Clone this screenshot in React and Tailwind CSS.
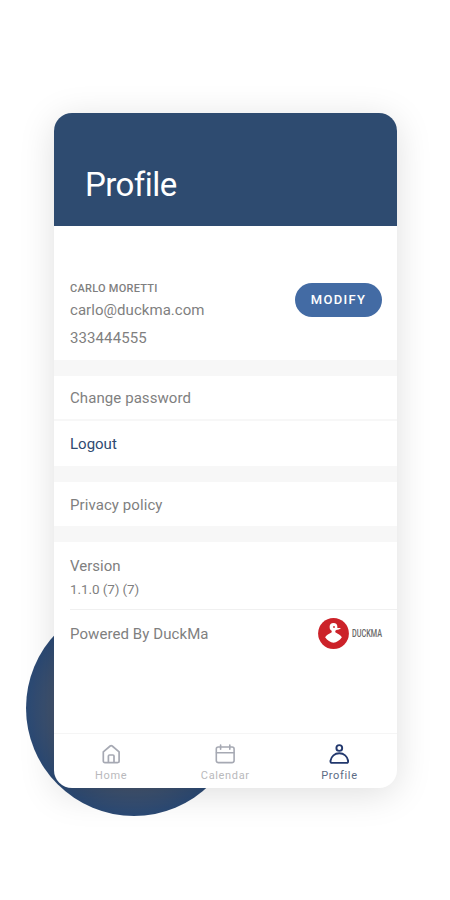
import React from 'react';

const tabs = [
    { label: 'Home', Icon: HomeIcon, active: false },
    { label: 'Calendar', Icon: CalendarIcon, active: false },
    { label: 'Profile', Icon: ProfileIcon, active: true },
];

function HomeIcon() {
    return (
        <svg width="20" height="20" viewBox="0 0 20 20" fill="none" stroke="#a6a9b3" strokeWidth="1.7" strokeLinejoin="round">
            <path d="M2.3 7.8 9.2 2c.7-.6 1.3-.6 2 0l6.9 5.800v9.100c0 1-.7 1.700-1.700 1.700H4c-1 0-1.700-.7-1.700-1.700V7.800Z" />
            <path d="M7.4 18.300v-6.200c0-.7.4-1.100 1.100-1.100h3.400c.7 0 1.100.4 1.100 1.100v6.200" />
        </svg>
    );
}

function CalendarIcon() {
    return (
        <svg width="20" height="20" viewBox="0 0 20 20" fill="none" stroke="#a6a9b3" strokeWidth="1.6" strokeLinecap="round">
            <rect x="1.3" y="3" width="17.8" height="15.6" rx="2" />
            <path d="M1.5 8.800h17.400M5.600 1v4.300M14.800 1v4.300" />
        </svg>
    );
}

function ProfileIcon() {
    return (
        <svg width="20" height="20" viewBox="0 0 20 20" fill="none" stroke="#22386d" strokeWidth="1.9" strokeLinejoin="round">
            <circle cx="10.3" cy="4" r="2.9" />
            <path d="M10.3 9.300c-4.600 0-8 3.300-8.800 7.400-.2 1.400.4 2.200 1.600 2.200h14.400c1.200 0 1.800-.8 1.600-2.200-.8-4.100-4.200-7.400-8.800-7.400Z" />
        </svg>
    );
}

function DuckLogo() {
    return (
        <svg width="32" height="32" viewBox="0 0 32 32">
            <circle cx="15.5" cy="15.500" r="15.400" fill="#cc2229" />
            <circle cx="15.5" cy="9" r="3.900" fill="#fff" />
            <path d="M17.5 9.200c2 .8 3.500 1 5.300.8-.6 1.400-2.800 1.900-5.300 1.700Z" fill="#fff" />
            <path d="M13.7 11.500h3.600v2.700c2.800 1.500 5.200 3 6.600 5-2.400 3.200-5.200 5-8.400 5.600-3.200-.6-6-2.400-8.400-5.600 1.400-2 3.800-3.500 6.600-5Z" fill="#fff" />
            <circle cx="16" cy="9" r="0.900" fill="#cc2229" />
        </svg>
    );
}

export default function App() {
    return (
        <div className="relative h-[900px] w-[450px] overflow-hidden bg-white pl-[54px] pt-[113px] font-['Roboto',sans-serif] text-[#7f7f7f]">
            <div className="absolute left-[26px] top-[600px] h-[216px] w-[216px] rounded-full bg-[radial-gradient(circle_closest-side,#43536c_72%,#2c4a74_98%)]" />

            <div className="relative flex h-[675px] w-[342.5px] flex-col overflow-hidden rounded-[18px] bg-white shadow-[0_6px_36px_rgba(0,0,0,0.13)]">
                <div className="flex h-[113px] shrink-0 items-end bg-[#2e4b70] pb-[22px] pl-[31px]">
                    <h1 className="text-[33px] leading-[38px] tracking-[-0.55px] text-white">Profile</h1>
                </div>

                <div className="flex h-[134px] shrink-0 justify-between pl-4 pr-[15px] pt-[54px]">
                    <div>
                        <p className="pt-px text-[11px] font-medium leading-4 tracking-[0.25px]">CARLO MORETTI</p>
                        <p className="mt-[3px] text-[15px] leading-[20px] tracking-[0.05px]">carlo@duckma.com</p>
                        <p className="mt-2 text-[15px] leading-[20px] tracking-[0.1px]">333444555</p>
                    </div>
                    <button className="mt-[3px] h-[34px] w-[87px] rounded-full bg-[#436ba4] pl-px text-[13px] font-medium leading-[34px] tracking-[1.3px] text-white">MODIFY</button>
                </div>

                <div className="h-[16px] shrink-0 bg-[#f7f7f7]" />
                <div className="h-[45px] shrink-0 border-b-2 border-[#f7f7f7] pl-4 pt-[12px] text-[15px] leading-[20px] tracking-[0.08px]">Change password</div>
                <div className="h-[45px] shrink-0 pl-4 pt-[13px] text-[15px] leading-[20px] text-[#304a70]">Logout</div>
                <div className="h-[16px] shrink-0 bg-[#f7f7f7]" />
                <div className="h-[44px] shrink-0 pl-4 pt-[13px] text-[15px] leading-[20px] tracking-[0.08px]">Privacy policy</div>
                <div className="h-[16px] shrink-0 bg-[#f7f7f7]" />

                <div className="ml-4 h-[68px] shrink-0 border-b border-[#f0f0f0] pt-[14px]">
                    <p className="text-[15px] leading-[20px]">Version</p>
                    <p className="mt-[4px] text-[13.5px] leading-[18px] tracking-[-0.1px]">1.1.0 (7) (7)</p>
                </div>

                <div className="flex h-[48px] shrink-0 items-center justify-between pl-4 pr-[13px]">
                    <p className="text-[15px] leading-[20px] tracking-[0.08px]">Powered By DuckMa</p>
                    <div className="flex items-center gap-[2px]">
                        <DuckLogo />
                        <svg width="32" height="18" viewBox="0 0 32 18" className="overflow-visible">
                            <text x="0" y="12.4" textLength="30" lengthAdjust="spacingAndGlyphs" fontSize="10" fontWeight="500" fill="#686868">DUCKMA</text>
                        </svg>
                    </div>
                </div>

                <div className="mt-auto flex h-[55px] shrink-0 border-t border-[#f5f5f5] pt-[10px]">
                    {tabs.map(({ label, Icon, active }) => (
                        <div key={label} className="flex flex-1 flex-col items-center">
                            <Icon />
                            <span className={active ? 'mt-[5px] text-[11px] leading-[13px] tracking-[0.65px] text-[#5c6b84]' : 'mt-[5px] text-[11px] leading-[13px] tracking-[0.65px] text-[#b9b9bc]'}>
                                {label}
                            </span>
                        </div>
                    ))}
                </div>
            </div>
        </div>
    );
}
